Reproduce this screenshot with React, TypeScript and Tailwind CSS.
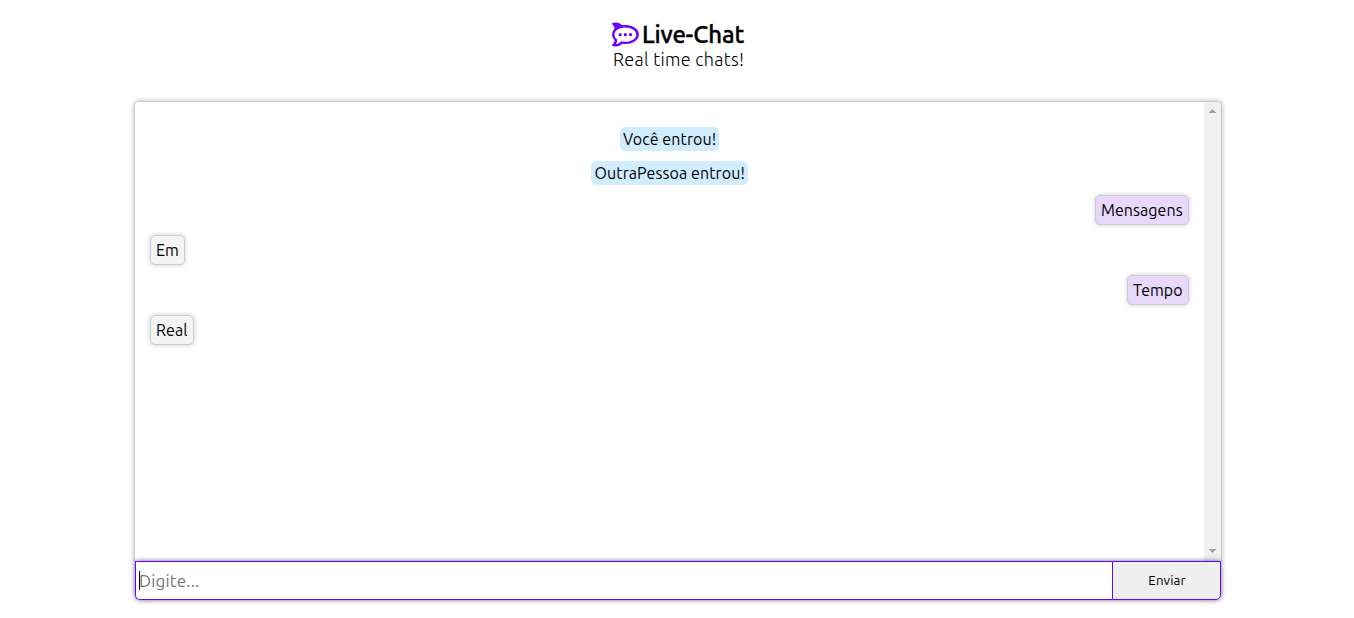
import React from "react";
import { FaRocketchat } from "react-icons/fa";

type Message = { text: string; kind: "notice" | "mine" | "other"; size: string };

const messages: Message[] = [
  { text: "Você entrou!", kind: "notice", size: "w-[99px] pl-[3px] tracking-[0.1px]" },
  { text: "OutraPessoa entrou!", kind: "notice", size: "w-[157px] pl-[3.5px] tracking-[0.1px]" },
  { text: "Mensagens", kind: "mine", size: "w-[94px] pl-[5px] tracking-[0.06px]" },
  { text: "Em", kind: "other", size: "w-[35px] pl-[5px]" },
  { text: "Tempo", kind: "mine", size: "w-[62px] pl-[5px]" },
  { text: "Real", kind: "other", size: "w-[44px] pl-[5px] tracking-[0.1px]" },
];

const styles = {
  notice: "self-center h-6 rounded-[5px] bg-[#d0edff]",
  mine: "self-end h-[30px] rounded-[5px] border border-[#cccccc] bg-[#e8d9fc] shadow-[0_0_5px_rgba(0,0,0,0.2)]",
  other: "self-start h-[30px] rounded-[5px] border border-[#cccccc] bg-[#f4f4f4] shadow-[0_0_5px_rgba(0,0,0,0.2)]",
};

function Bubble({ text, kind, size }: Message) {
  return (
    <div className={`flex items-center whitespace-nowrap text-[16px] leading-none ${styles[kind]} ${size}`}>
      <span>{text}</span>
    </div>
  );
}

export default function App() {
  return (
    <div className="flex h-[618px] flex-col items-center overflow-hidden bg-white font-['Ubuntu','Noto_Sans',sans-serif] text-black">
      <header className="ml-[2px] mt-5 flex h-[81px] w-[132px] flex-col">
        <h1 className="flex h-7 items-center whitespace-nowrap text-[24px] font-medium leading-7">
          <FaRocketchat className="mr-[3px] h-[27px] w-[27px] shrink-0 text-[#6a00ff]" />
          <span className="pt-[2px] tracking-[-0.1px] [-webkit-text-stroke:0.4px_#000]">Live-Chat</span>
        </h1>
        <p className="whitespace-nowrap pl-px text-[18px] font-light leading-[22px] tracking-[0.3px]">Real time chats!</p>
      </header>
      <main className="ml-[2px] flex w-[1088px] flex-col">
        <section className="flex h-[460px] rounded-t-[5px] border border-b-0 border-[#cccccc] shadow-[0_0_5px_rgba(0,0,0,0.3)]">
          <div className="flex grow flex-col gap-[10px] px-[15px] pt-[25px]">
            {messages.map((m) => (
              <Bubble key={m.text} {...m} />
            ))}
          </div>
          <div className="flex w-[17px] shrink-0 flex-col items-center justify-between rounded-tr-[4px] bg-[#f0f0f0] pb-[8px] pt-[7px]">
            <svg width="7" height="4" viewBox="0 0 7 4" fill="#a3a3a3" shapeRendering="crispEdges"><path d="M3 0h1v1h1v1h1v1h1v1H0V3h1V2h1V1h1Z" /></svg>
            <svg width="7" height="4" viewBox="0 0 7 4" fill="#a3a3a3" shapeRendering="crispEdges"><path d="M0 0h7v1H6v1H5v1H4v1H3V3H2V2H1V1H0Z" /></svg>
          </div>
        </section>
        <form className="relative mx-px flex h-[39px] rounded-b-[5px] shadow-[0_0_5px_rgba(0,0,0,0.6)]">
          <div className="flex w-[977px] items-center rounded-bl-[5px] border border-r-0 border-[#6a00ff] bg-white pl-[3px]">
            <span className="h-[19px] w-px bg-black" />
            <span className="-ml-px whitespace-nowrap text-[17px] leading-none tracking-[0.2px] text-[#757575]">Digite...</span>
          </div>
          <button type="button" className="flex w-[109px] items-center justify-center rounded-br-[5px] border border-[#6a00ff] bg-[#efefef] pl-px text-[13.33px] leading-none tracking-[0.1px]">
            Enviar
          </button>
        </form>
      </main>
    </div>
  );
}
